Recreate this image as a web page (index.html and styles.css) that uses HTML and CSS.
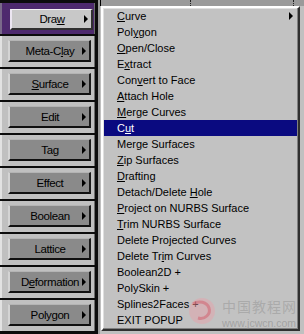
FILE: index.html
```html
<!DOCTYPE html>
<html lang="en">
<head>
    <meta charset="UTF-8">
    <meta name="viewport" content="width=device-width, initial-scale=1.0">
    <title>Draw Popup</title>
    <link rel="stylesheet" href="styles.css">
</head>
<body>
    <div class="screen">
        <div class="panel">
            <div class="row active"><div class="btn"><span class="label">Dra<u>w</u></span><i class="arrow"></i></div></div>
            <div class="row"><div class="btn"><span class="label">Meta-C<u>l</u>ay</span><i class="arrow"></i></div></div>
            <div class="row"><div class="btn"><span class="label"><u>S</u>urface</span><i class="arrow"></i></div></div>
            <div class="row"><div class="btn"><span class="label">Edit</span><i class="arrow"></i></div></div>
            <div class="row"><div class="btn"><span class="label">Tag</span><i class="arrow"></i></div></div>
            <div class="row"><div class="btn"><span class="label">Effect</span><i class="arrow"></i></div></div>
            <div class="row"><div class="btn"><span class="label">Boolean</span><i class="arrow"></i></div></div>
            <div class="row"><div class="btn"><span class="label">Lattice</span><i class="arrow"></i></div></div>
            <div class="row"><div class="btn"><span class="label">D<u>e</u>formation</span><i class="arrow"></i></div></div>
            <div class="row"><div class="btn"><span class="label">Polygon</span><i class="arrow"></i></div></div>
        </div>
        <div class="side">
            <div class="strip"><span class="grip"></span><span class="grip"></span></div>
            <ul class="menu">
                <li><span><u>C</u>urve</span><i class="arrow"></i></li>
                <li><span>Pol<u>y</u>gon</span></li>
                <li><span><u>O</u>pen/Close</span></li>
                <li><span>E<u>x</u>tract</span></li>
                <li><span>Con<u>v</u>ert to Face</span></li>
                <li><span><u>A</u>ttach Hole</span></li>
                <li><span><u>M</u>erge Curves</span></li>
                <li class="hot"><span>C<u>u</u>t</span></li>
                <li><span>Merge Surfaces</span></li>
                <li><span><u>Z</u>ip Surfaces</span></li>
                <li><span><u>D</u>rafting</span></li>
                <li><span>Detach/Delete <u>H</u>ole</span></li>
                <li><span><u>P</u>roject on NURBS Surface</span></li>
                <li><span><u>T</u>rim NURBS Surface</span></li>
                <li><span>Delete Projected Curves</span></li>
                <li><span>Delete Tr<u>i</u>m Curves</span></li>
                <li><span>Boolean2D +</span></li>
                <li><span>PolySkin +</span></li>
                <li><span>Splines2Faces +</span></li>
                <li><span>EXIT POPUP</span></li>
            </ul>
        </div>
        <div class="watermark">
            <svg class="logo" width="32" height="30" viewBox="0 0 32 30">
                <circle cx="17" cy="15" r="13" fill="#e8a0a8" opacity="0.45"/>
                <path d="M8 8 C14 4 22 6 24 12 C26 18 20 24 13 22" fill="none" stroke="#d05060" stroke-width="3" opacity="0.45"/>
            </svg>
            <div class="mark">
                <span class="cn">中国教程网</span>
                <span class="url">www.jcwcn.com</span>
            </div>
        </div>
    </div>
</body>
</html>
```

FILE: styles.css
```css
* {
    box-sizing: border-box;
}
body {
    margin: 0;
    background: #c0c0c0;
    font-family: "Liberation Sans", Arial, sans-serif;
}
.screen {
    position: relative;
    display: flex;
    width: 304px;
    height: 334px;
    overflow: hidden;
}
.panel {
    width: 100px;
    background: #0c0c0c;
    padding-top: 3px;
    padding-right: 3px;
    border-right: 2px solid #9c9c9c;
    display: flex;
    flex-direction: column;
    gap: 2px;
}
.row {
    height: 31px;
    flex-shrink: 0;
    background: #c0c0c0;
    border-left: 2px solid #e2e2e2;
    border-right: 1px solid #6c6c6c;
    padding: 4px 3px 0 6px;
}
.btn {
    display: flex;
    align-items: center;
    height: 22px;
    background: #8a8a8a;
    border-top: 1px solid #b4b4b4;
    border-left: 2px solid #d4d4d4;
    border-right: 2px solid #1a1a1a;
    border-bottom: 2px solid #101010;
    padding-left: 8px;
    padding-right: 3px;
    font-size: 11.5px;
    letter-spacing: -0.4px;
    color: #000;
}
.btn .label {
    flex: 1;
    text-align: center;
}
.row.active {
    background: #4e2a6e;
    border-left-color: #7a6a8a;
    padding: 6px 1px 0 8px;
}
.row.active .btn {
    height: 21px;
    background: #c8c8c8;
    border-top: 1px solid #f4f4f4;
    border-left: 2px solid #ece6f2;
    border-right: 2px solid #303030;
    border-bottom: 2px solid #303030;
}
.arrow {
    width: 0;
    height: 0;
    border-left: 4px solid #000;
    border-top: 4px solid transparent;
    border-bottom: 4px solid transparent;
}
.side {
    flex: 1;
    display: flex;
    flex-direction: column;
}
.strip {
    height: 6px;
    background: #9a9a9a;
    border-left: 1px solid #000;
    position: relative;
}
.grip {
    position: absolute;
    top: 0;
    width: 1px;
    height: 6px;
    border-left: 1px dotted #202020;
}
.grip:first-child {
    left: 89px;
}
.grip:last-child {
    left: 192px;
}
.menu {
    list-style: none;
    margin: 0 4px 0 1px;
    padding: 0 1px;
    height: 325px;
    background: #c2c2c2;
    border: 2px solid;
    border-color: #ffffff #303030 #303030 #ffffff;
    box-shadow: inset -1px -1px #808080, inset 1px 1px #dfdfdf;
}
.menu li {
    display: flex;
    align-items: center;
    justify-content: space-between;
    height: 16px;
    padding: 0 4px 0 13px;
    font-size: 11px;
    color: #000;
}
.menu li.hot {
    background: #0a0a80;
    color: #fff;
}
.watermark {
    position: absolute;
    left: 185px;
    top: 296px;
    display: flex;
    align-items: flex-start;
    gap: 5px;
    pointer-events: none;
}
.mark {
    display: flex;
    flex-direction: column;
    gap: 4px;
    margin-top: 2px;
}
.cn {
    font-family: "Noto Sans CJK SC", sans-serif;
    font-size: 14px;
    line-height: 16px;
    letter-spacing: 1px;
    color: rgba(150, 150, 150, 0.55);
}
.url {
    font-size: 10.5px;
    line-height: 11px;
    color: rgba(140, 140, 140, 0.6);
}
```
